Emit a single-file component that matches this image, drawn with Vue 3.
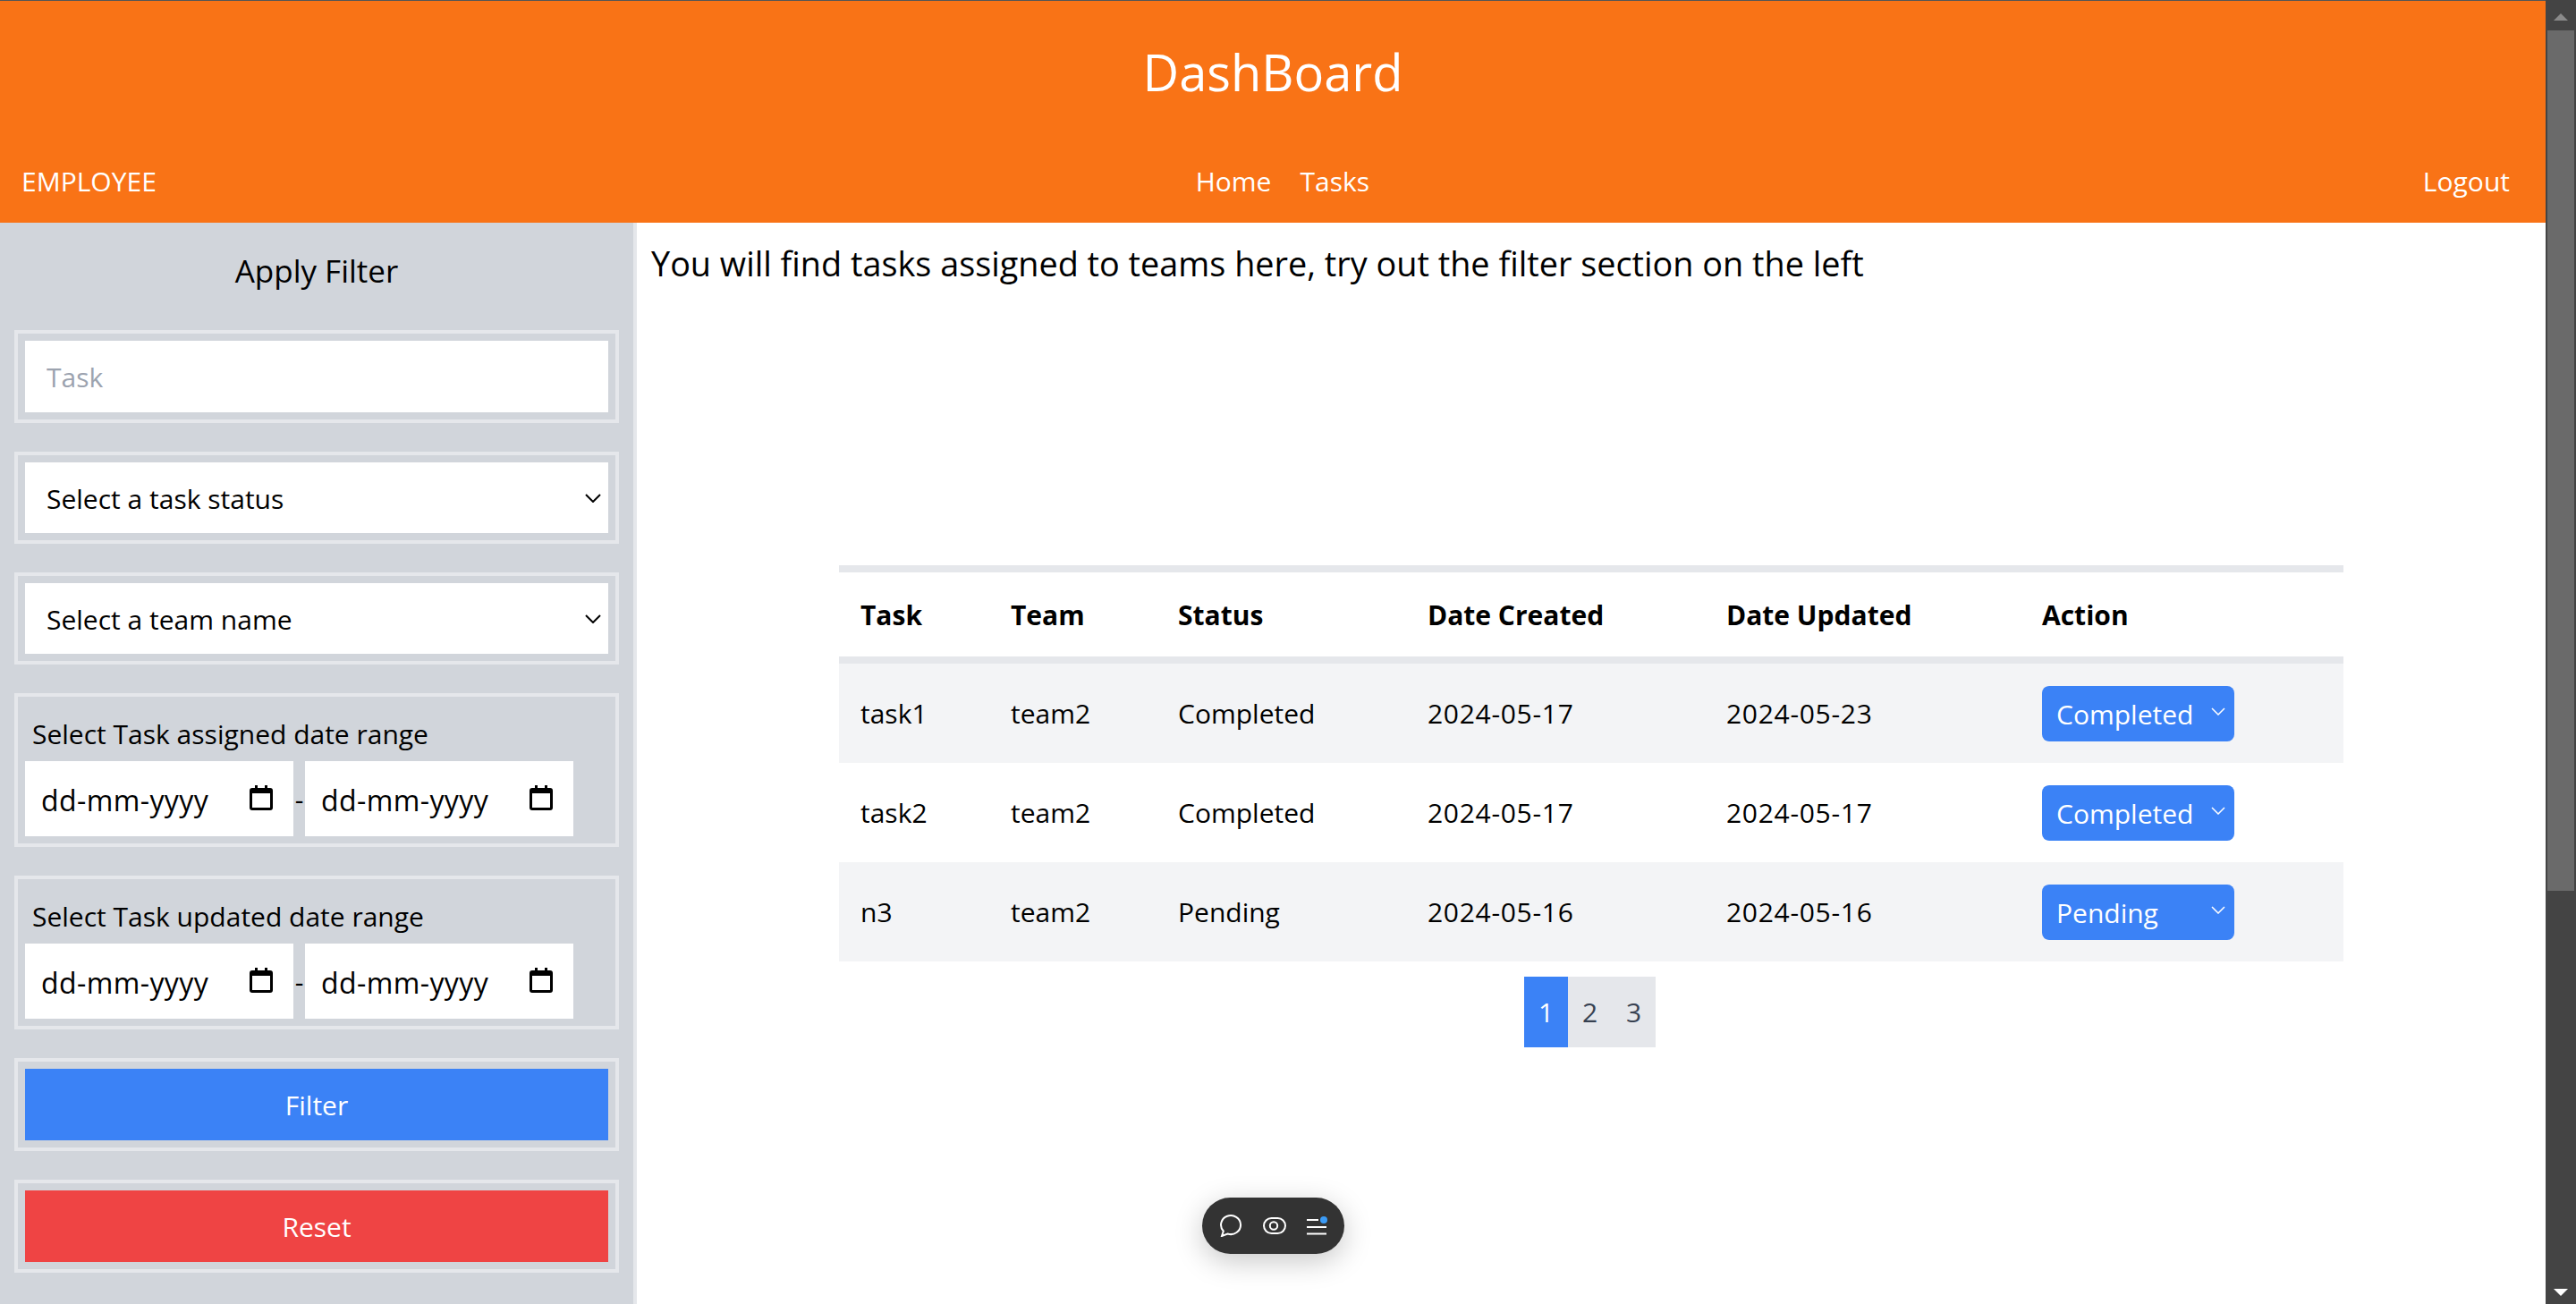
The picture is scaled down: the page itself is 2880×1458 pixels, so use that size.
<script setup>
const tasks = [
  { name: "task1", team: "team2", status: "Completed", created: "2024-05-17", updated: "2024-05-23" },
  { name: "task2", team: "team2", status: "Completed", created: "2024-05-17", updated: "2024-05-17" },
  { name: "n3", team: "team2", status: "Pending", created: "2024-05-16", updated: "2024-05-16" },
];
const ranges = ["Select Task assigned date range", "Select Task updated date range"];
</script>

<template>
  <div class="window">
    <div class="page">
      <header class="topbar">
        <h1 class="title">DashBoard</h1>
        <nav class="nav">
          <span class="role">EMPLOYEE</span>
          <div class="links">
            <a>Home</a>
            <a>Tasks</a>
          </div>
          <a class="logout">Logout</a>
        </nav>
      </header>

      <div class="content">
        <aside class="sidebar">
          <h2 class="filter-title">Apply Filter</h2>
          <div class="field">
            <input class="control" type="text" placeholder="Task" />
          </div>
          <div class="field">
            <select class="control picker">
              <option>Select a task status</option>
            </select>
          </div>
          <div class="field">
            <select class="control picker">
              <option>Select a team name</option>
            </select>
          </div>
          <div v-for="range in ranges" :key="range" class="field">
            <div class="range-label">{{ range }}</div>
            <div class="range">
              <div class="date">
                <span>dd-mm-yyyy</span>
                <svg class="cal" viewBox="0 0 26 28" width="26" height="28">
                  <path d="M6 0h3v3h8V0h3v3h3a3 3 0 0 1 3 3v19a3 3 0 0 1-3 3H3a3 3 0 0 1-3-3V6a3 3 0 0 1 3-3h3zM3 9v16h20V9z" />
                </svg>
              </div>
              <span class="dash">-</span>
              <div class="date">
                <span>dd-mm-yyyy</span>
                <svg class="cal" viewBox="0 0 26 28" width="26" height="28">
                  <path d="M6 0h3v3h8V0h3v3h3a3 3 0 0 1 3 3v19a3 3 0 0 1-3 3H3a3 3 0 0 1-3-3V6a3 3 0 0 1 3-3h3zM3 9v16h20V9z" />
                </svg>
              </div>
            </div>
          </div>
          <div class="field">
            <button class="action blue">Filter</button>
          </div>
          <div class="field">
            <button class="action red">Reset</button>
          </div>
        </aside>

        <main class="main">
          <p class="intro">You will find tasks assigned to teams here, try out the filter section on the left</p>
          <table class="tasks">
            <thead>
              <tr>
                <th class="c1">Task</th>
                <th class="c2">Team</th>
                <th class="c3">Status</th>
                <th class="c4">Date Created</th>
                <th class="c5">Date Updated</th>
                <th>Action</th>
              </tr>
            </thead>
            <tbody>
              <tr v-for="task in tasks" :key="task.name">
                <td>{{ task.name }}</td>
                <td>{{ task.team }}</td>
                <td>{{ task.status }}</td>
                <td class="day">{{ task.created }}</td>
                <td class="day">{{ task.updated }}</td>
                <td>
                  <select class="status">
                    <option>{{ task.status }}</option>
                  </select>
                </td>
              </tr>
            </tbody>
          </table>
          <div class="pager">
            <span class="current">1</span>
            <span>2</span>
            <span>3</span>
          </div>
        </main>
      </div>

      <div class="pill">
        <svg viewBox="0 0 26 25" width="26" height="25">
          <path d="M3 24l1.800-5.500A11 10.500 0 1 1 9.500 21.500z" />
        </svg>
        <svg viewBox="0 0 26 19" width="26" height="19">
          <rect x="1" y="1" width="24" height="17" rx="8.500" />
          <circle cx="12" cy="9.500" r="4.200" />
        </svg>
        <svg class="menu" viewBox="0 0 23 22" width="23" height="22">
          <path d="M0 4h13M0 12h22M0 19.500h22" />
          <circle cx="19" cy="4" r="4" />
        </svg>
      </div>
    </div>

    <div class="scrollbar">
      <svg viewBox="0 0 16 8" width="16" height="8"><path d="M8 0l8 8H0z" fill="#8a8a8a" /></svg>
      <div class="thumb"></div>
      <svg class="down" viewBox="0 0 16 8" width="16" height="8"><path d="M0 0h16l-8 8z" fill="#fff" /></svg>
    </div>
  </div>
</template>

<style>
html,
body {
  margin: 0;
  overflow: hidden;
}
</style>

<style scoped>
.window {
  display: flex;
  height: 1458px;
  overflow: hidden;
  font-family: "Open Sans", "Noto Sans", sans-serif;
  font-size: 30px;
  color: #000;
  background: #fff;
}
.page {
  position: relative;
  flex: 1;
  min-width: 0;
  display: flex;
  flex-direction: column;
}
.topbar {
  height: 249px;
  box-sizing: border-box;
  background: #f97316;
  border-top: 1px solid #555;
  color: #fff;
  display: flex;
  flex-direction: column;
}
.title {
  margin: 39px 0 0;
  text-align: center;
  font-size: 56px;
  font-weight: 400;
  line-height: 80px;
}
.nav {
  margin-top: 59px;
  padding: 0 40px 0 24px;
  display: flex;
  justify-content: space-between;
  line-height: 48px;
}
.links {
  display: flex;
  gap: 32px;
  margin-left: -16px;
}
.content {
  flex: 1;
  display: flex;
  min-height: 0;
}
.sidebar {
  width: 712px;
  box-sizing: border-box;
  flex-shrink: 0;
  background: #d1d5db;
  border-right: 4px solid #e5e7eb;
  padding: 0 16px;
  display: flex;
  flex-direction: column;
  gap: 32px;
}
.filter-title {
  margin: 22px 0 0;
  height: 66px;
  line-height: 64px;
  text-align: center;
  font-size: 35px;
  font-weight: 400;
}
.field {
  width: 676px;
  box-sizing: border-box;
  border: 4px solid #e5e7eb;
  padding: 8px;
  display: flex;
  flex-direction: column;
}
.control {
  box-sizing: border-box;
  width: 100%;
  height: 80px;
  border: 0;
  border-radius: 0;
  padding: 0 24px;
  background: #fff;
  font: inherit;
  color: #000;
  outline: none;
}
.control::placeholder {
  color: #9ca3af;
}
.picker {
  height: 79px;
  padding-top: 2px;
  appearance: none;
  background: #fff url("data:image/svg+xml,%3Csvg xmlns='http://www.w3.org/2000/svg' viewBox='0 0 18 10'%3E%3Cpath d='M1 1l8 8 8-8' fill='none' stroke='%23000' stroke-width='2'/%3E%3C/svg%3E") no-repeat right 8px center / 18px 10px;
}
.range-label {
  padding: 10px 8px 6px;
  line-height: 48px;
}
.range {
  display: flex;
  align-items: center;
}
.date {
  width: 300px;
  height: 84px;
  box-sizing: border-box;
  background: #fff;
  padding: 2px 23px 0 18px;
  display: flex;
  align-items: center;
  justify-content: space-between;
  font-size: 32px;
  letter-spacing: 0.4px;
}
.cal {
  fill: #000;
  margin-top: -4px;
}
.dash {
  width: 13px;
  text-align: center;
  font-size: 30px;
}
.action {
  height: 80px;
  border: 0;
  font: inherit;
  color: #fff;
}
.blue {
  background: #3b82f6;
}
.red {
  background: #ef4444;
}
.main {
  flex: 1;
  min-width: 0;
  padding: 0 226px 0 16px;
}
.intro {
  margin: 18px 0 0;
  font-size: 37.8px;
  line-height: 56px;
  white-space: nowrap;
}
.tasks {
  margin: 309px 0 0 210px;
  width: 1682px;
  table-layout: fixed;
  border-collapse: collapse;
}
thead tr {
  border-top: 8px solid #e5e7eb;
  border-bottom: 8px solid #e5e7eb;
}
th {
  height: 94px;
  padding: 0 24px;
  text-align: left;
  font-weight: 700;
}
td {
  height: 111px;
  padding: 0 24px;
}
.day {
  letter-spacing: 0.7px;
}
tbody tr:nth-child(odd) {
  background: #f3f4f6;
}
.c1 {
  width: 168px;
}
.c2 {
  width: 187px;
}
.c3 {
  width: 279px;
}
.c4 {
  width: 334px;
}
.c5 {
  width: 353px;
}
.c1,
.c2,
.c3,
.c4,
.c5 {
  box-sizing: border-box;
}
.status {
  display: block;
  width: 215px;
  height: 62px;
  appearance: none;
  border: 0;
  border-radius: 8px;
  padding: 2px 16px 0;
  font: inherit;
  color: #fff;
  background: #3b82f6 url("data:image/svg+xml,%3Csvg xmlns='http://www.w3.org/2000/svg' viewBox='0 0 16 9'%3E%3Cpath d='M1 1l7 7 7-7' fill='none' stroke='%23fff' stroke-width='1.500'/%3E%3C/svg%3E") no-repeat right 10px top 24px / 16px 9px;
}
.pager {
  margin: 17px 0 0 976px;
  display: flex;
}
.pager span {
  width: 49px;
  height: 79px;
  line-height: 79px;
  text-align: center;
  background: #e5e7eb;
  color: #374151;
}
.pager .current {
  background: #3b82f6;
  color: #fff;
}
.pill {
  position: absolute;
  left: 1344px;
  top: 1339px;
  width: 159px;
  height: 63px;
  box-sizing: border-box;
  padding: 0 19px;
  border-radius: 32px;
  background: #333;
  box-shadow: 0 8px 32px rgba(0, 0, 0, 0.22);
  display: flex;
  align-items: center;
  justify-content: space-between;
}
.pill svg {
  fill: none;
  stroke: #fff;
  stroke-width: 2;
}
.pill .menu circle {
  fill: #3b9bf6;
  stroke: none;
}
.scrollbar {
  width: 34px;
  flex-shrink: 0;
  background: #444;
  display: flex;
  flex-direction: column;
  align-items: center;
  padding-top: 15px;
  box-sizing: border-box;
}
.thumb {
  width: 30px;
  height: 962px;
  margin-top: 11px;
  background: #6a6a6a;
}
.down {
  margin-top: auto;
  margin-bottom: 9px;
}
</style>
